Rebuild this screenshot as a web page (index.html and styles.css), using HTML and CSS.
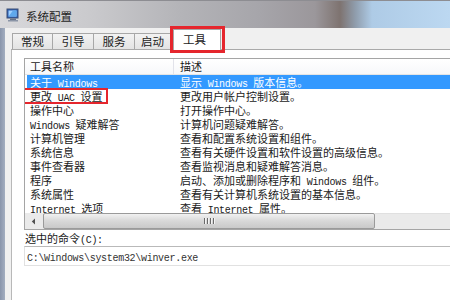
FILE: index.html
```html
<!DOCTYPE html>
<html>
<head>
<meta charset="utf-8">
<link rel="stylesheet" href="styles.css">
</head>
<body>
<div class="titlebar">
  <svg class="appicon" width="14" height="14" viewBox="0 0 14 14">
    <rect x="1" y="1" width="11" height="9" fill="#2a5db0" stroke="#3c4f74" stroke-width="1"/>
    <rect x="2.5" y="2.5" width="8" height="6" fill="#9fd0ff"/>
    <path d="M2.5 8.5 L7 2.5 L10.5 2.5 L10.5 8.5 Z" fill="#5fa8ec"/>
    <rect x="4" y="10.5" width="6" height="1.5" fill="#6a7488"/>
    <rect x="2" y="12" width="10" height="1.5" fill="#8a94a6"/>
  </svg>
  <span class="title">系统配置</span>
</div>
<div class="frame">
  <div class="edge"></div>
  <div class="client">
    <div class="tabs">
      <div class="tab">常规</div>
      <div class="tab">引导</div>
      <div class="tab">服务</div>
      <div class="tab">启动</div>
      <div class="tab active">工具<span class="redbox tabmark"></span></div>
    </div>
    <div class="panel">
      <div class="list">
        <div class="header">
          <div class="c1">工具名称</div>
          <div class="c2">描述</div>
        </div>
        <div class="rows">
          <div class="row sel"><div class="c1">关于<span class="en"> Windows</span></div><div class="c2">显示<span class="en"> Windows </span>版本信息。</div></div>
          <div class="row"><div class="c1"><span class="redbox rowmark"></span>更改<span class="en"> UAC </span>设置</div><div class="c2">更改用户帐户控制设置。</div></div>
          <div class="row"><div class="c1">操作中心</div><div class="c2">打开操作中心。</div></div>
          <div class="row"><div class="c1"><span class="en">Windows </span>疑难解答</div><div class="c2">计算机问题疑难解答。</div></div>
          <div class="row"><div class="c1">计算机管理</div><div class="c2">查看和配置系统设置和组件。</div></div>
          <div class="row"><div class="c1">系统信息</div><div class="c2">查看有关硬件设置和软件设置的高级信息。</div></div>
          <div class="row"><div class="c1">事件查看器</div><div class="c2">查看监视消息和疑难解答消息。</div></div>
          <div class="row"><div class="c1">程序</div><div class="c2">启动、添加或删除程序和<span class="en"> Windows </span>组件。</div></div>
          <div class="row"><div class="c1">系统属性</div><div class="c2">查看有关计算机系统设置的基本信息。</div></div>
          <div class="row"><div class="c1"><span class="en">Internet </span>选项</div><div class="c2">查看<span class="en"> Internet </span>属性。</div></div>
        </div>
        <div class="hscroll">
          <div class="sbtn"><svg width="5" height="7" viewBox="0 0 5 7"><path d="M4 0.5 L0.8 3.5 L4 6.5 Z" fill="#505050"/></svg></div>
          <div class="thumb"><span class="grip"></span><span class="grip"></span><span class="grip"></span><span class="grip"></span></div>
          <div class="track"></div>
        </div>
      </div>
      <div class="cmdlabel">选中的命令<span class="en">(C):</span></div>
      <div class="cmdbox"><span class="en">C:\Windows\system32\winver.exe</span></div>
    </div>
  </div>
</div>
</body>
</html>
```
FILE: styles.css
```css
html, body {
  margin: 0;
  padding: 0;
}
body {
  width: 450px;
  height: 300px;
  overflow: hidden;
  font-family: "Noto Sans CJK SC", sans-serif;
  font-size: 11px;
  color: #1a1a1a;
  background: #ffffff;
}
.titlebar {
  height: 28px;
  display: flex;
  align-items: center;
  padding-left: 6px;
  box-sizing: border-box;
  border-top: 1px solid #8d8d92;
  background: linear-gradient(to right, #d8d8db 0, #cacacd 90px, #b4b4b8 180px, #a6a5aa 260px, #9b979b 315px, #7e7370 340px, #8f9cab 355px, #aecbe6 372px, #bcd8f1 450px);
}
.appicon {
  display: block;
}
.title {
  margin-left: 6px;
  font-size: 11.5px;
  line-height: 14px;
  color: #1e1e1e;
  margin-top: 2px;
}
.frame {
  display: flex;
  height: 272px;
}
.edge {
  width: 5px;
  background: linear-gradient(to right, #8995ab, #a3aec0);
}
.client {
  flex: 1;
  background: #f0f0f0;
  padding-left: 6px;
  display: flex;
  flex-direction: column;
  min-width: 0;
}
.tabs {
  display: flex;
  align-items: flex-end;
  height: 21px;
  padding-left: 1px;
  position: relative;
  z-index: 1;
}
.tab {
  width: 41px;
  height: 16px;
  box-sizing: border-box;
  border: 1px solid #a7a7a7;
  border-bottom: none;
  border-left: none;
  background: linear-gradient(#f2f2f2, #e3e3e3);
  text-align: center;
  font-size: 11.5px;
  line-height: 15px;
  color: #222;
}
.tab:first-child {
  border-left: 1px solid #a7a7a7;
}
.tab:nth-child(4) {
  width: 36px;
}
.tab.active {
  width: 48px;
  height: 21px;
  margin-left: 2px;
  margin-bottom: -1px;
  border-left: 1px solid #a7a7a7;
  background: #ffffff;
  text-align: left;
  padding-left: 9px;
  line-height: 19px;
  position: relative;
}
.redbox {
  position: absolute;
  box-sizing: border-box;
  border: 3px solid #e5262d;
}
.tabmark {
  left: -4px;
  top: -4px;
  right: -5px;
  bottom: -3px;
}
.panel {
  flex: 1;
  background: #ffffff;
  border-top: 1px solid #a9a9a9;
  border-left: 1px solid #b8b8b8;
  padding: 8px 0 0 12px;
  min-width: 0;
  overflow: hidden;
}
.list {
  border: 1px solid #a5a5a5;
  border-right: none;
}
.header {
  display: flex;
  height: 16px;
  line-height: 15px;
  background: linear-gradient(#ffffff, #f7f8fa);
  border-bottom: 1px solid #e5e5e5;
  box-sizing: border-box;
}
.header .c1 {
  border-right: 1px solid #e2e3ea;
}
.c1 {
  width: 149px;
  padding-left: 5px;
  box-sizing: border-box;
  white-space: nowrap;
  flex: none;
  position: relative;
}
.c2 {
  padding-left: 6px;
  white-space: nowrap;
}
.rows {
  height: 138px;
  overflow: hidden;
}
.row {
  display: flex;
  height: 14px;
  line-height: 14px;
}
.row.sel {
  background: #3399ff;
  color: #ffffff;
  margin-left: 2px;
}
.row.sel .c1 {
  width: 147px;
  padding-left: 3px;
}
.rowmark {
  left: -2px;
  top: -1px;
  width: 85px;
  height: 16px;
  border-width: 2px;
}
.en {
  font-family: "Liberation Mono", monospace;
  font-size: 10px;
  letter-spacing: -0.3px;
  white-space: pre;
}
.hscroll {
  display: flex;
  height: 16px;
  background: #eaeaea;
}
.sbtn {
  width: 17px;
  display: flex;
  align-items: center;
  justify-content: center;
}
.thumb {
  width: 332px;
  margin: 0 0 0 1px;
  box-sizing: border-box;
  border: 1px solid #9a9a9a;
  border-radius: 2px;
  background: linear-gradient(#f1f1f1, #d8d8d8 50%, #c9c9c9);
  display: flex;
  align-items: center;
  justify-content: center;
  gap: 1px;
}
.grip {
  width: 1px;
  height: 6px;
  background: #6a6a6a;
  border-right: 1px solid #f4f4f4;
}
.track {
  flex: 1;
  border-top: 1px solid #e0e0e0;
}
.cmdlabel {
  margin-top: 1px;
  height: 15px;
  line-height: 15px;
  padding-left: 1px;
}
.cmdbox {
  height: 20px;
  box-sizing: border-box;
  border: 1px solid #e1e1e1;
  border-top: 1px solid #b9b9b9;
  border-right: none;
  padding-left: 2px;
  line-height: 18px;
  color: #333;
}
```
